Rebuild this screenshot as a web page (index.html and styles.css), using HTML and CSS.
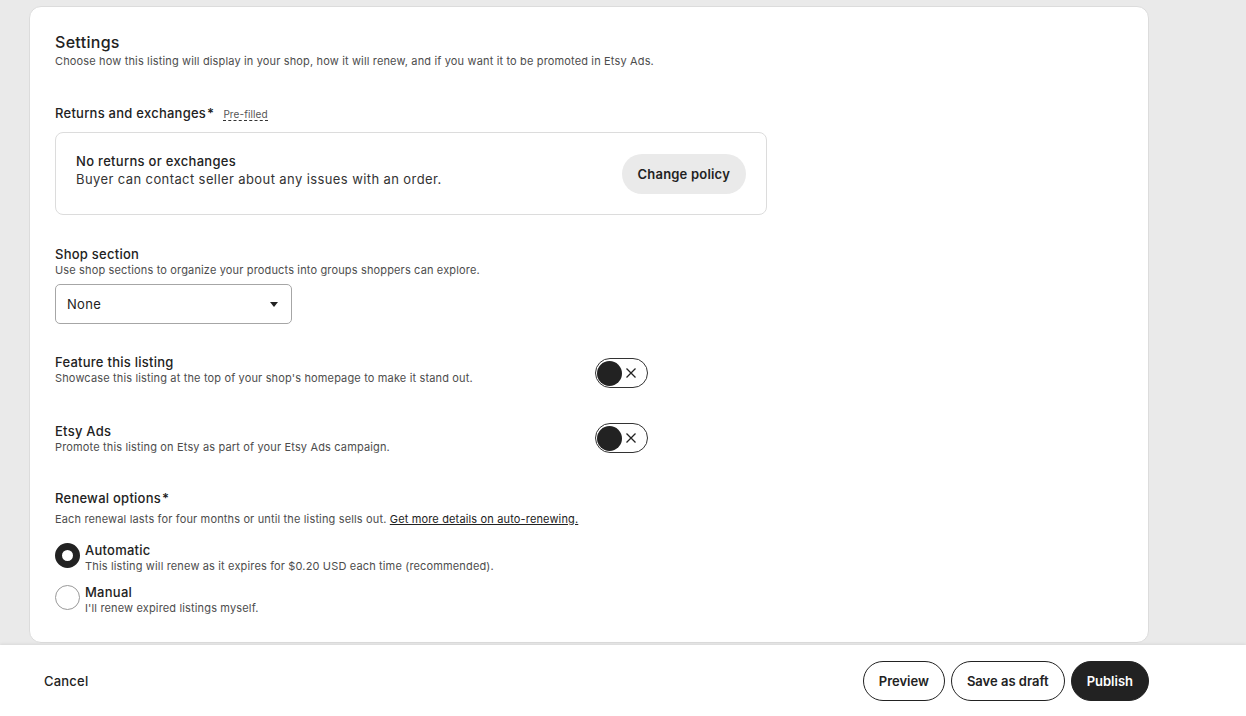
FILE: index.html
```html
<!DOCTYPE html>
<html lang="en">
<head>
<meta charset="utf-8">
<title>Settings</title>
<link rel="stylesheet" href="styles.css">
</head>
<body>
<main class="page">
  <section class="card">
    <h2 class="title">Settings</h2>
    <p class="sub">Choose how this listing will display in your shop, how it will renew, and if you want it to be promoted in Etsy Ads.</p>

    <div class="label returns-label">Returns and exchanges<span class="star">*</span><span class="prefilled">Pre-filled</span></div>
    <div class="policy">
      <div class="policy-text">
        <div class="policy-title">No returns or exchanges</div>
        <div class="policy-body">Buyer can contact seller about any issues with an order.</div>
      </div>
      <button class="btn-grey">Change policy</button>
    </div>

    <div class="label shop-label">Shop section</div>
    <p class="sub">Use shop sections to organize your products into groups shoppers can explore.</p>
    <div class="select">
      <span>None</span>
      <span class="caret"></span>
    </div>

    <div class="toggle-row feature-row">
      <div>
        <div class="label">Feature this listing</div>
        <p class="sub">Showcase this listing at the top of your shop's homepage to make it stand out.</p>
      </div>
      <div class="toggle"><span class="knob"></span><svg class="x" width="12" height="12" viewBox="0 0 12 12"><path d="M1.5 1.5 L10.5 10.5 M10.5 1.5 L1.5 10.5" stroke="#222" stroke-width="1.3" fill="none"/></svg></div>
    </div>

    <div class="toggle-row ads-row">
      <div>
        <div class="label">Etsy Ads</div>
        <p class="sub">Promote this listing on Etsy as part of your Etsy Ads campaign.</p>
      </div>
      <div class="toggle"><span class="knob"></span><svg class="x" width="12" height="12" viewBox="0 0 12 12"><path d="M1.5 1.5 L10.5 10.5 M10.5 1.5 L1.5 10.5" stroke="#222" stroke-width="1.3" fill="none"/></svg></div>
    </div>

    <div class="label renew-label">Renewal options<span class="star">*</span></div>
    <p class="sub renew-sub">Each renewal lasts for four months or until the listing sells out. <a class="link">Get more details on auto-renewing.</a></p>

    <div class="radio-row first">
      <span class="radio checked"></span>
      <div>
        <div class="radio-title">Automatic</div>
        <p class="sub">This listing will renew as it expires for $0.20 USD each time (recommended).</p>
      </div>
    </div>
    <div class="radio-row">
      <span class="radio"></span>
      <div>
        <div class="radio-title">Manual</div>
        <p class="sub">I'll renew expired listings myself.</p>
      </div>
    </div>
  </section>
</main>
<footer class="footer">
  <button class="btn-text">Cancel</button>
  <div class="actions">
    <button class="btn-outline">Preview</button>
    <button class="btn-outline">Save as draft</button>
    <button class="btn-dark">Publish</button>
  </div>
</footer>
</body>
</html>
```

FILE: styles.css
```css
* { box-sizing: border-box; }
html, body { margin: 0; padding: 0; }
body {
  background: #eaeaea;
  font-family: Inter, "Noto Sans", "Liberation Sans", sans-serif;
  color: #222222;
  width: 1246px;
  height: 716px;
  overflow: hidden;
}
.page {
  padding: 6px 0 0 29px;
  height: 645px;
}
.card {
  width: 1120px;
  height: 637px;
  background: #fff;
  border: 1px solid #dcdcdc;
  border-radius: 12px;
  padding: 25px 25px 0 25px;
}
.title {
  margin: 0;
  font-size: 16px;
  line-height: 20px;
  font-weight: 500;
  letter-spacing: 0.3px;
}
.sub {
  margin: 0;
  font-size: 11px;
  line-height: 14px;
  color: #4d4d4d;
  letter-spacing: 0.15px;
}
.title + .sub { margin-top: 2px; }
.label {
  font-size: 13px;
  line-height: 18px;
  font-weight: 500;
  letter-spacing: 0.25px;
}
.star { margin-left: 1px; font-weight: 600; }
.returns-label { margin-top: 36px; display: flex; align-items: baseline; }
.prefilled {
  margin-left: 9px;
  font-size: 10px;
  font-weight: 400;
  color: #555;
  border-bottom: 1px dashed #333;
  line-height: 11px;
  letter-spacing: 0.1px;
}
.policy {
  margin-top: 10px;
  width: 712px;
  height: 83px;
  border: 1px solid #dcdcdc;
  border-radius: 8px;
  display: flex;
  justify-content: space-between;
  padding: 0 20px 0 20px;
}
.policy-text { padding-top: 19px; }
.policy-title { font-size: 13px; line-height: 18px; font-weight: 500; letter-spacing: 0.3px; }
.policy-body { font-size: 13px; line-height: 19px; color: #333; letter-spacing: 0.4px; }
.btn-grey {
  align-self: center;
  margin-top: 1px;
  height: 40px;
  padding: 0 16px;
  border: none;
  border-radius: 20px;
  background: #eaeaea;
  font-family: inherit;
  font-size: 13px;
  font-weight: 600;
  letter-spacing: 0.2px;
  color: #222;
}
.shop-label { margin-top: 30px; }
.select {
  margin-top: 7px;
  width: 237px;
  height: 40px;
  border: 1px solid #a6a6a6;
  border-radius: 5px;
  display: flex;
  align-items: center;
  justify-content: space-between;
  padding: 0 13px 0 11px;
  font-size: 13px;
  letter-spacing: 0.3px;
}
.caret {
  width: 0; height: 0;
  border-left: 4px solid transparent;
  border-right: 4px solid transparent;
  border-top: 5px solid #222;
}
.toggle-row {
  width: 593px;
  display: flex;
  justify-content: space-between;
  align-items: flex-start;
}
.feature-row { margin-top: 29px; }
.feature-row .toggle { margin-top: 5px; }
.ads-row { margin-top: 34px; }
.ads-row .toggle { margin-top: 1px; }
.toggle {
  width: 53px;
  height: 30px;
  border: 1.5px solid #333;
  border-radius: 15px;
  display: flex;
  align-items: center;
  padding-left: 1px;
}
.knob {
  width: 25px; height: 25px;
  border-radius: 50%;
  background: #222;
}
.x {
  margin-left: 3px;
  display: block;
}
.renew-label { margin-top: 35px; }
.renew-sub { margin-top: 5px; }
.link { color: #222; text-decoration: underline; }
.radio-row {
  display: flex;
  align-items: flex-start;
  gap: 5px;
  margin-top: 10px;
}
.radio-row.first { margin-top: 15px; }
.radio {
  flex: none;
  width: 25px; height: 25px;
  border-radius: 50%;
  border: 1px solid #999;
  margin-top: 2px;
  background: #fff;
}
.radio.checked {
  border: 7px solid #222;
}
.radio-title { font-size: 13px; line-height: 18px; font-weight: 500; letter-spacing: 0.25px; }
.footer {
  height: 71px;
  background: #fff;
  box-shadow: 0 -1px 3px rgba(0,0,0,0.08);
  display: flex;
  align-items: center;
  justify-content: space-between;
  padding: 0 97px 0 44px;
}
.btn-text {
  border: none; background: none; padding: 0;
  font-family: inherit; font-size: 13px; font-weight: 500; color: #222; letter-spacing: 0.2px;
}
.actions { display: flex; gap: 6px; }
.btn-outline, .btn-dark {
  height: 40px;
  border-radius: 20px;
  font-family: inherit;
  font-size: 13px;
  font-weight: 600;
  padding: 0 15px;
}
.btn-outline { background: #fff; border: 1px solid #222; color: #222; }
.btn-dark { background: #222; border: 1px solid #222; color: #fff; }
```
